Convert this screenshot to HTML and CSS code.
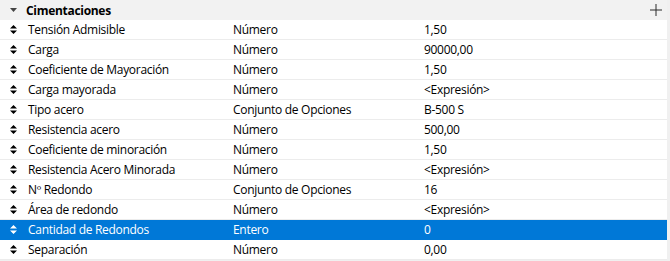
FILE: index.html
```html
<!DOCTYPE html>
<html lang="es">
<head>
    <meta charset="UTF-8">
    <title>Cimentaciones</title>
    <link rel="stylesheet" href="styles.css">
</head>
<body>
    <div class="panel">
        <div class="group-header">
            <svg class="caret" width="7" height="4" viewBox="0 0 7 4"><path d="M0 0h7L3.5 4z" fill="#444"/></svg>
            <span class="group-title">Cimentaciones</span>
            <svg class="add" width="12" height="12" viewBox="0 0 12 12"><path d="M6 0v12M0 6h12" stroke="#2b2b2b" stroke-width="1"/></svg>
        </div>
        <div class="rows" id="rows"></div>
    </div>

    <script>
        const parametros = [
            ['Tensión Admisible', 'Número', '1,50'],
            ['Carga', 'Número', '90000,00'],
            ['Coeficiente de Mayoración', 'Número', '1,50'],
            ['Carga mayorada', 'Número', '<Expresión>'],
            ['Tipo acero', 'Conjunto de Opciones', 'B-500 S'],
            ['Resistencia acero', 'Número', '500,00'],
            ['Coeficiente de minoración', 'Número', '1,50'],
            ['Resistencia Acero Minorada', 'Número', '<Expresión>'],
            ['Nº Redondo', 'Conjunto de Opciones', '16'],
            ['Área de redondo', 'Número', '<Expresión>'],
            ['Cantidad de Redondos', 'Entero', '0'],
            ['Separación', 'Número', '0,00']
        ];
        const seleccionado = 10;

        const icono = '<svg width="7" height="9" viewBox="0 0 7 9"><path d="M3.5 0L7 3.5H0z M3.5 9L0 5.5h7z" fill="currentColor"/></svg>';

        const cont = document.getElementById('rows');
        parametros.forEach(function(p, i) {
            const fila = document.createElement('div');
            fila.className = 'row' + (i === seleccionado ? ' selected' : '');
            fila.innerHTML = '<span class="grip">' + icono + '</span>' +
                '<span class="cell"></span><span class="cell"></span><span class="cell"></span>';
            const celdas = fila.querySelectorAll('.cell');
            p.forEach(function(t, j) { celdas[j].textContent = t; });
            cont.appendChild(fila);
        });
    </script>
</body>
</html>
```

FILE: styles.css
```css
body {
    margin: 0;
    background: #f0f0f0;
    font-family: 'Open Sans', 'Noto Sans', Arial, sans-serif;
    font-size: 12px;
    letter-spacing: -0.3px;
    color: #000;
}
.panel {
    width: 667px;
    background: #fff;
}
.group-header {
    height: 20px;
    background: #f2f2f2;
    display: flex;
    align-items: center;
    padding: 0 5px 0 10px;
}
.caret {
    margin-right: 9px;
}
.group-title {
    font-weight: bold;
    flex: 1;
}
.add {
    margin-bottom: 1px;
}
.row {
    height: 19px;
    border-bottom: 1px solid #ececec;
    display: grid;
    grid-template-columns: 28px 205px 191px 1fr;
    align-items: center;
}
.row .grip {
    display: flex;
    justify-content: center;
    width: 28px;
    margin-left: -1px;
}
.row.selected {
    background: #0078d7;
    color: #fff;
    border-bottom-color: #0078d7;
}
.cell {
    white-space: nowrap;
}
```
